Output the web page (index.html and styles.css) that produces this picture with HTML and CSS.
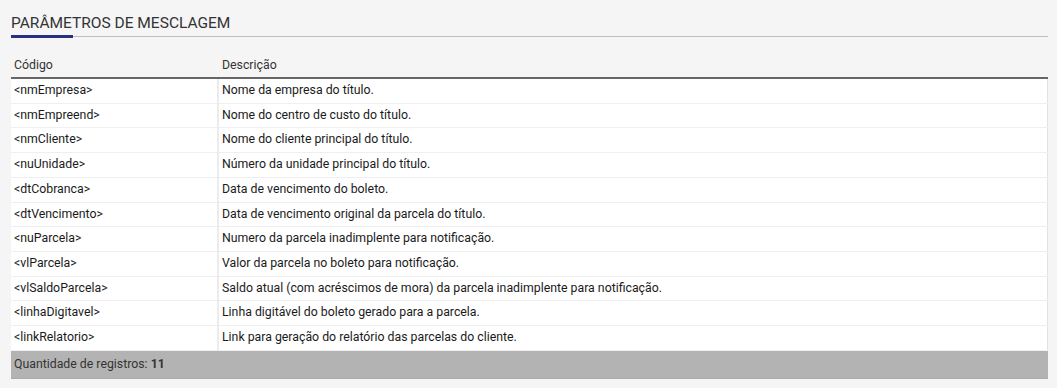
FILE: index.html
```html
<!DOCTYPE html>
<html lang="pt-BR">
<head>
<meta charset="utf-8">
<title>Parâmetros de mesclagem</title>
<link rel="stylesheet" href="styles.css">
</head>
<body>
<section class="panel">
  <h2 class="panel-title"><span>PARÂMETROS DE MESCLAGEM</span></h2>
  <table class="grid">
    <thead>
      <tr><th class="col-code">Código</th><th>Descrição</th></tr>
    </thead>
    <tbody>
      <tr><td>&lt;nmEmpresa&gt;</td><td>Nome da empresa do título.</td></tr>
      <tr><td>&lt;nmEmpreend&gt;</td><td>Nome do centro de custo do título.</td></tr>
      <tr><td>&lt;nmCliente&gt;</td><td>Nome do cliente principal do título.</td></tr>
      <tr><td>&lt;nuUnidade&gt;</td><td>Número da unidade principal do título.</td></tr>
      <tr><td>&lt;dtCobranca&gt;</td><td>Data de vencimento do boleto.</td></tr>
      <tr><td>&lt;dtVencimento&gt;</td><td>Data de vencimento original da parcela do título.</td></tr>
      <tr><td>&lt;nuParcela&gt;</td><td>Numero da parcela inadimplente para notificação.</td></tr>
      <tr><td>&lt;vlParcela&gt;</td><td>Valor da parcela no boleto para notificação.</td></tr>
      <tr><td>&lt;vlSaldoParcela&gt;</td><td>Saldo atual (com acréscimos de mora) da parcela inadimplente para notificação.</td></tr>
      <tr><td>&lt;linhaDigitavel&gt;</td><td>Linha digitável do boleto gerado para a parcela.</td></tr>
      <tr><td>&lt;linkRelatorio&gt;</td><td>Link para geração do relatório das parcelas do cliente.</td></tr>
    </tbody>
    <tfoot>
      <tr><td colspan="2">Quantidade de registros: <strong>11</strong></td></tr>
    </tfoot>
  </table>
</section>
</body>
</html>
```
FILE: styles.css
```css
html, body {
  margin: 0;
  padding: 0;
  background: #f5f5f5;
}
body {
  font-family: Roboto, "Liberation Sans", Arial, sans-serif;
  color: #222;
}
.panel {
  margin: 0 9px 0 11px;
  padding-top: 13px;
}
.panel-title {
  margin: 0;
  font-size: 15.5px;
  line-height: 20px;
  font-weight: 400;
  color: #333;
  border-bottom: 1px solid #bdbdbd;
  padding-bottom: 3px;
  position: relative;
}
.panel-title span {
  display: inline-block;
}
.panel-title::after {
  content: "";
  position: absolute;
  left: 0;
  bottom: -2px;
  width: 62px;
  height: 3px;
  background: #2b2f80;
}
.grid {
  width: 100%;
  margin-top: 17px;
  border-collapse: collapse;
  font-size: 12.3px;
}
.grid th {
  text-align: left;
  font-weight: 400;
  color: #333;
  padding: 3px 4px 3px;
  line-height: 17px;
  border-bottom: 2px solid #666;
}
.grid th.col-code {
  width: 200px;
  padding-left: 3px;
}
.grid tbody td {
  background: #fff;
  padding: 3px 3px;
  line-height: 17.7px;
  border-bottom: 1px solid #efefef;
  border-right: 1px solid #ececec;
  color: #1a1a1a;
}
.grid tbody td:first-child {
  padding-left: 3px;
  border-right: 2px solid #ececec;
}
.grid tbody td:last-child {
  border-right: 1px solid #e2e2e2;
}
.grid tfoot td {
  background: #b3b3b3;
  color: #333;
  padding: 5px 3px 5px;
  line-height: 17px;
  border-bottom: 1px solid #aaa;
}
.grid tfoot strong {
  font-weight: 700;
  color: #333;
}
```
